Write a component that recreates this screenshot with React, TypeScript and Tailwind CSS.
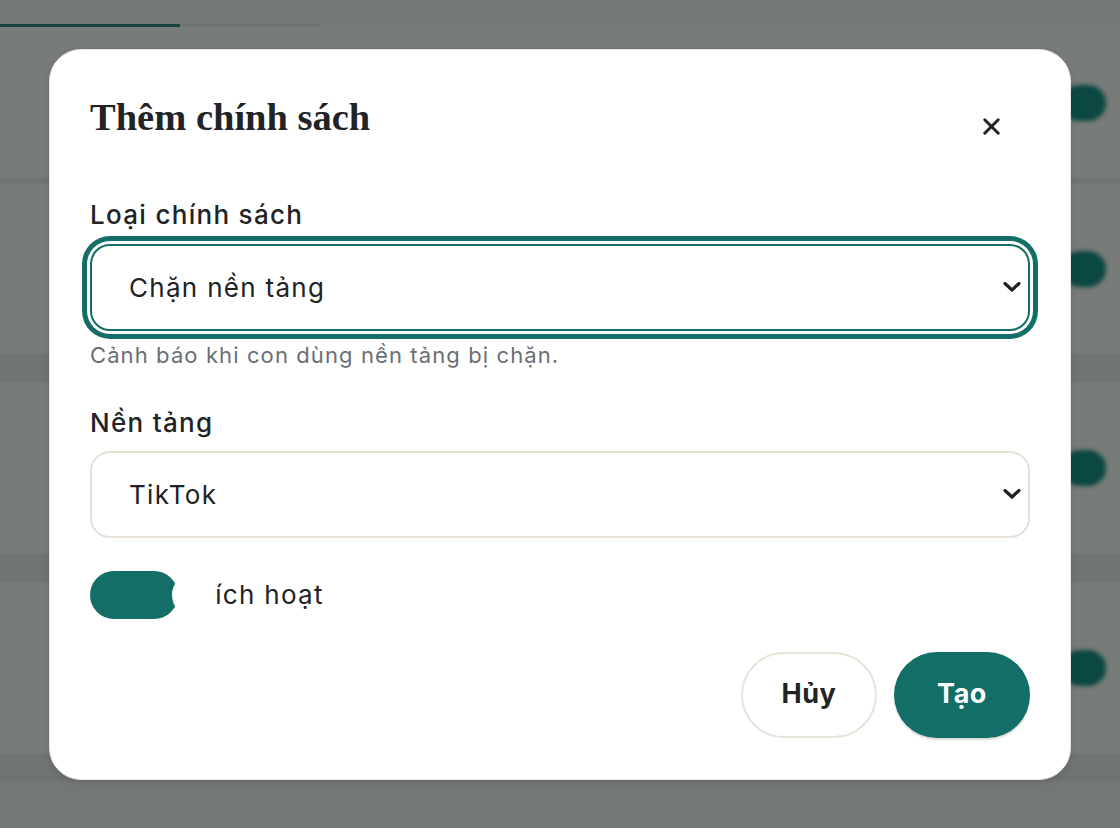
import { X } from 'lucide-react';

const sans = { fontFamily: 'Inter, "Noto Sans", sans-serif' };

function BgRow({ height, pill }: { height: string; pill?: boolean }) {
  return (
    <div className={`flex items-center justify-end pr-[14px] bg-[#777b79] ${height}`}>
      {pill && <div className="w-[44px] h-[36px] rounded-full bg-[#0c4843] blur-[2px]" />}
    </div>
  );
}

function Band({ height }: { height: string }) {
  return <div className={`bg-[#6f7371] ${height}`} />;
}

function SelectField({ value, focused }: { value: string; focused?: boolean }) {
  return (
    <div
      className={`relative h-[87px] rounded-[20px] border-2 bg-white ${
        focused
          ? 'border-[#136e67] ring-[5px] ring-[#136e67] ring-offset-[3px] ring-offset-white'
          : 'border-[#e7e1d6]'
      }`}
    >
      <select
        defaultValue={value}
        className="w-full h-full appearance-none bg-transparent pl-[37px] pr-14 text-[26px] tracking-[0.05em] text-[#202224] outline-none"
        style={sans}
      >
        <option>{value}</option>
      </select>
      <svg
        width="18"
        height="11"
        viewBox="0 0 18 11"
        className="absolute right-[7px] top-1/2 -translate-y-1/2 pointer-events-none"
      >
        <polyline points="2,2 9,8.5 16,2" fill="none" stroke="#1f2123" strokeWidth="3.2" strokeLinecap="round" strokeLinejoin="round" />
      </svg>
    </div>
  );
}

export default function App() {
  return (
    <div className="relative w-[1120px] h-[828px] overflow-hidden bg-[#757977]">
      {/* blurred page behind the overlay */}
      <div className="flex flex-col">
        <div className="h-[24px] bg-[#737775]" />
        <div className="flex h-[3px]">
          <div className="w-[180px] bg-[#17423f]" />
          <div className="w-[140px] bg-[#6e7270]" />
          <div className="flex-1 bg-[#757977]" />
        </div>
        <BgRow height="h-[151px]" pill />
        <Band height="h-[6px]" />
        <BgRow height="h-[170px]" pill />
        <Band height="h-[28px]" />
        <BgRow height="h-[172px]" pill />
        <Band height="h-[28px]" />
        <BgRow height="h-[172px]" pill />
        <Band height="h-[28px]" />
        <div className="h-[46px] bg-[#737876]" />
      </div>

      {/* modal */}
      <div className="absolute inset-0 flex items-center justify-center">
        <div
          className="w-[1022px] rounded-[32px] border border-[#e9e4d9] bg-white px-[40px] pt-[41px] pb-[41px] shadow-[0_2px_6px_rgba(0,0,0,0.12)]"
          style={sans}
        >
          <div className="flex justify-between h-[52px]">
            <h2
              className="text-[38.5px] leading-[52px] font-bold text-[#222325]"
              style={{ fontFamily: '"Liberation Serif", "DejaVu Serif", serif' }}
            >
              Thêm chính sách
            </h2>
            <button className="mt-[14px] mr-[17px] w-[44px] h-[44px] flex items-center justify-center text-[#222325]">
              <X size={27} strokeWidth={2.6} />
            </button>
          </div>

          <label className="block mt-[54px] text-[26px] leading-[36px] font-medium tracking-[0.05em] text-[#222325]">
            Loại chính sách
          </label>
          <div className="mt-[11px]">
            <SelectField value="Chặn nền tảng" focused />
          </div>
          <p className="mt-[10px] text-[22px] leading-[28px] tracking-[0.05em] text-[#6a6e74]">
            Cảnh báo khi con dùng nền tảng bị chặn.
          </p>

          <label className="block mt-[36px] text-[26px] leading-[36px] font-medium tracking-[0.05em] text-[#222325]">
            Nền tảng
          </label>
          <div className="mt-[10px]">
            <SelectField value="TikTok" />
          </div>

          <div className="mt-[33px] flex items-center gap-[18px] h-[48px]">
            <div className="relative w-[88px] h-[48px] rounded-full bg-[#126e67]">
              <span className="absolute left-[82px] top-[2px] w-[44px] h-[44px] rounded-full bg-white" />
            </div>
            <span className="text-[26px] tracking-[0.05em] text-[#222325]">Kích hoạt</span>
          </div>

          <div className="mt-[33px] flex justify-end gap-[17px]">
            <button className="w-[136px] h-[86px] rounded-full border-2 border-[#e9e4d9] bg-white text-[27px] font-bold tracking-[0.02em] text-[#222325]">
              Hủy
            </button>
            <button className="w-[136px] h-[86px] rounded-full bg-[#126e67] text-[27px] font-bold tracking-[0.02em] text-white shadow-[0_2px_2px_rgba(0,0,0,0.15)]">
              Tạo
            </button>
          </div>
        </div>
      </div>
    </div>
  );
}
